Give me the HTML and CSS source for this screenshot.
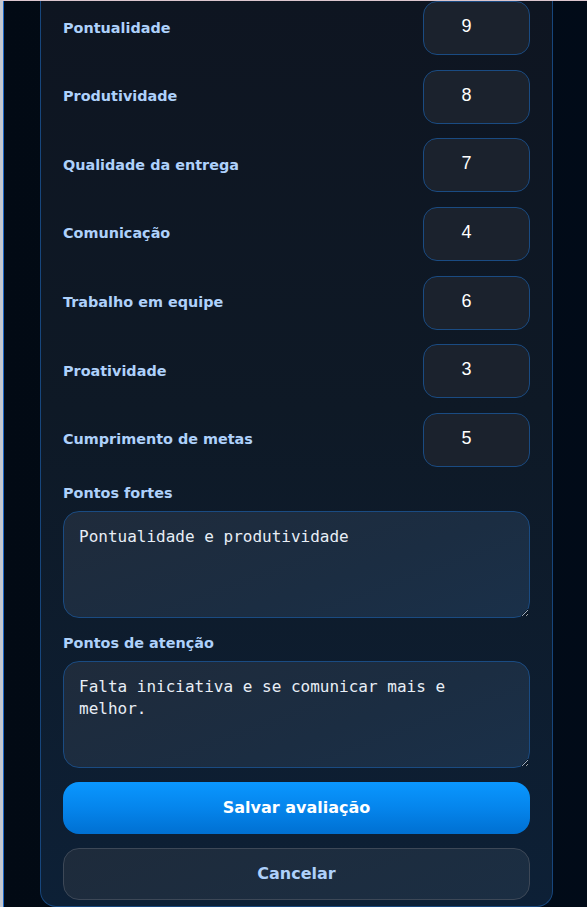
FILE: index.html
```html
<!DOCTYPE html>
<html lang="pt-BR">
<head>
<meta charset="utf-8">
<title>Avaliação</title>
<link rel="stylesheet" href="styles.css">
</head>
<body>
<div class="page">
  <div class="inner">
    <form class="card">
      <div class="scores">
        <label class="score-label">Pontualidade</label><input class="score" type="text" value="9">
        <label class="score-label">Produtividade</label><input class="score" type="text" value="8">
        <label class="score-label">Qualidade da entrega</label><input class="score" type="text" value="7">
        <label class="score-label">Comunicação</label><input class="score" type="text" value="4">
        <label class="score-label">Trabalho em equipe</label><input class="score" type="text" value="6">
        <label class="score-label">Proatividade</label><input class="score" type="text" value="3">
        <label class="score-label">Cumprimento de metas</label><input class="score" type="text" value="5">
      </div>
      <div class="field field-first">
        <label class="field-label">Pontos fortes</label>
        <textarea class="note">Pontualidade e produtividade</textarea>
      </div>
      <div class="field field-second">
        <label class="field-label">Pontos de atenção</label>
        <textarea class="note">Falta iniciativa e se comunicar mais e melhor.</textarea>
      </div>
      <button class="btn btn-primary" type="button">Salvar avaliação</button>
      <button class="btn btn-secondary" type="button">Cancelar</button>
    </form>
  </div>
</div>
</body>
</html>
```
FILE: styles.css
```css
html, body {
  margin: 0;
  padding: 0;
  height: 100%;
  overflow: hidden;
}
body {
  background: #010a16;
  font-family: "DejaVu Sans", sans-serif;
}
.page {
  min-height: 100%;
  border-left: 3px solid #c4c8d0;
  border-top: 1px solid #dcc6ce;
  box-sizing: border-box;
  background: linear-gradient(90deg, #020a14 0%, #030b16 50%, #010b18 100%);
}
.inner {
  border-left: 1px solid #1c66c4;
  padding-left: 36px;
  min-height: 906px;
}
.card {
  width: 513px;
  box-sizing: border-box;
  border: 1px solid #17467c;
  border-top: 0;
  border-radius: 0 0 16px 16px;
  background: linear-gradient(180deg, #0e1521 0%, #0e1926 45%, #0d2036 100%);
  padding: 0 22px 6px;
  display: flex;
  flex-direction: column;
  gap: 14px;
}
.scores {
  display: grid;
  grid-template-columns: 1fr 107px;
  row-gap: 14.67px;
  align-items: center;
}
.score-label, .field-label {
  color: #aed1fb;
  font-weight: bold;
  font-size: 14.4px;
  line-height: 17px;
}
.score {
  height: 54px;
  box-sizing: border-box;
  width: 107px;
  border: 1px solid #1a4b82;
  border-radius: 14px;
  background: #1b222d;
  color: #ffffff;
  font-family: "Liberation Sans", Arial, sans-serif;
  font-size: 18px;
  text-align: center;
  padding: 0 30px 3px 10px;
  outline: none;
}
.field {
  display: flex;
  flex-direction: column;
  gap: 9px;
}
.field-first { margin-top: 4px; }
.field-second { margin-top: 3px; }
.note {
  height: 107px;
  box-sizing: border-box;
  border: 1px solid #1a4b82;
  border-radius: 16px;
  background: linear-gradient(160deg, #1f2b3b 0%, #1b2d42 60%, #1a3049 100%);
  color: #e8eef6;
  font-family: "DejaVu Sans Mono", monospace;
  font-size: 16px;
  line-height: 22.4px;
  padding: 14px 15px;
  outline: none;
}
.btn {
  height: 52px;
  border-radius: 16px;
  font-family: "DejaVu Sans", sans-serif;
  font-weight: bold;
  font-size: 16px;
  cursor: pointer;
}
.btn-primary {
  border: 0;
  color: #ffffff;
  background: linear-gradient(180deg, #0a97ff 0%, #0585ec 50%, #0070d2 100%);
}
.btn-secondary {
  border: 1px solid #3d4857;
  color: #aed1fb;
  background: linear-gradient(160deg, #1e2b3b 0%, #1b2e43 100%);
}
```
